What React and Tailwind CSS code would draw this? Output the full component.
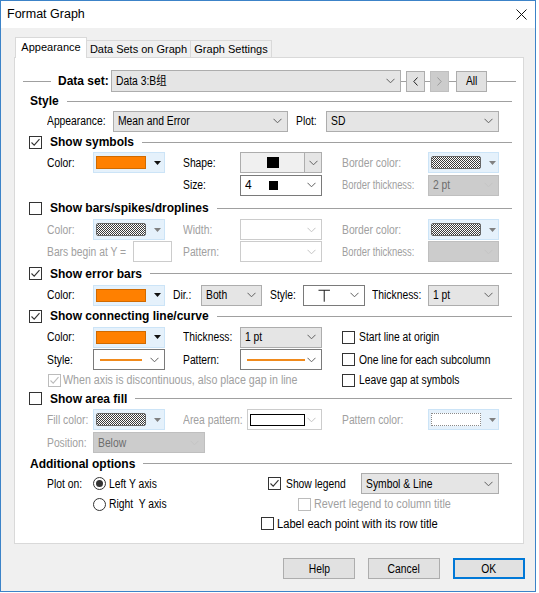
import React from 'react';

const NF = "font-['Liberation_Sans','Noto_Sans_CJK_SC',Arial,sans-serif] text-[12px]";
const BF = "font-['Liberation_Sans',Arial,sans-serif] font-bold text-[12px] text-black whitespace-nowrap";
const DIM = 'text-[#a0a0a0]';

// The dialog font is a narrow MS Sans Serif; squeeze Liberation Sans horizontally to match.
function Txt({ children, sx = 'scale-x-[0.86]', origin = 'origin-left' }) {
    return <span className={`inline-block whitespace-pre ${origin} ${sx}`}>{children}</span>;
}

function Chevron({ color = '#606060' }) {
    return (
        <svg width="9" height="6" viewBox="0 0 9 6" className="shrink-0">
            <path d="M0.5 0.8 L4.5 4.8 L8.5 0.8" fill="none" stroke={color} strokeWidth="1" />
        </svg>
    );
}

function Combo({ w, variant = 'gray', children, h = 'h-[21px]' }) {
    const styles = {
        gray: 'bg-[#e5e5e5] border-[#adadad] text-black',
        white: 'bg-white border-[#7a7a7a] text-black',
        disabled: 'bg-[#cccccc] border-[#bfbfbf] text-[#6d6d6d]',
        disabledWhite: 'bg-white border-[#cccccc] text-[#a0a0a0]',
    };
    const off = variant === 'disabled' || variant === 'disabledWhite';
    return (
        <div className={`${w} ${h} shrink-0 border ${styles[variant]} flex items-center pl-[4px] pr-[5px]`}>
            <div className="flex-1 flex items-center min-w-0 overflow-hidden whitespace-nowrap">
                {typeof children === 'string' ? <Txt>{children}</Txt> : children}
            </div>
            <Chevron color={off ? '#c4c4c4' : '#606060'} />
        </div>
    );
}

function ColorDrop({ kind, w = 'w-[72px]' }) {
    let swatch;
    if (kind === 'orange') {
        swatch = <div className="w-[50px] h-[13px] bg-[#ff8000] border border-[#d06a00]" />;
    } else if (kind === 'hatch') {
        swatch = (
            <div className="w-[50px] h-[13px] border border-[#666] rounded-[2px] bg-[repeating-conic-gradient(#3a3a3a_0_25%,#ffffff_0_50%)] bg-[length:2px_2px]" />
        );
    } else {
        swatch = <div className="w-[50px] h-[13px] border border-dotted border-[#8a8a8a] bg-white" />;
    }
    return (
        <div className={`${w} h-[21px] shrink-0 bg-[#e5f1fb] border border-[#cce4f7] flex items-center pl-[2px] gap-[8px]`}>
            {swatch}
            <svg width="7" height="4" viewBox="0 0 7 4">
                <path d="M0 0 H7 L3.5 4 Z" fill={kind === 'orange' ? '#111' : '#808080'} />
            </svg>
        </div>
    );
}

function Checkbox({ checked, disabled, className = '' }) {
    const c = disabled ? '#bcbcbc' : '#333333';
    return (
        <div className={`w-[13px] h-[13px] shrink-0 border bg-white flex items-center justify-center ${disabled ? 'border-[#bcbcbc]' : 'border-[#333333]'} ${className}`}>
            {checked && (
                <svg width="11" height="11" viewBox="0 0 11 11">
                    <path d="M1.5 5.5 L4.2 8.2 L9.5 2.2" fill="none" stroke={c} strokeWidth="1.1" />
                </svg>
            )}
        </div>
    );
}

function Radio({ checked }) {
    return (
        <div className="w-[13px] h-[13px] shrink-0 rounded-full border border-[#333333] bg-white flex items-center justify-center">
            {checked && <div className="w-[7px] h-[7px] rounded-full bg-[#333333]" />}
        </div>
    );
}

function Label({ w, dim, sx, children }) {
    return (
        <span className={`${w} shrink-0 whitespace-nowrap ${dim ? DIM : 'text-black'}`}>
            <Txt sx={sx}>{children}</Txt>
        </span>
    );
}

function Gap({ w }) {
    return <div className={`${w} shrink-0`} />;
}

function Heading({ h, check, checked, children }) {
    return (
        <div className={`${h} shrink-0 flex items-center pr-[11px] ${check ? 'pl-[14px]' : 'pl-[15px]'}`}>
            {check && <Checkbox checked={checked} className="mr-[8px]" />}
            <span className={BF}>{children}</span>
            <div className="flex-1 h-px bg-[#a0a0a0] ml-[8px]" />
        </div>
    );
}

function Row({ h, pl = 'pl-[32px]', children }) {
    return <div className={`${h} ${pl} shrink-0 flex items-center ${NF}`}>{children}</div>;
}

function OrangeLine({ w }) {
    return <div className={`${w} h-[2px] bg-[#f08a1c]`} />;
}

function NavBtn({ disabled, children }) {
    return (
        <div className={`w-[19px] h-[21px] shrink-0 border flex items-center justify-center ${disabled ? 'bg-[#cccccc] border-[#bfbfbf]' : 'bg-[#e1e1e1] border-[#adadad]'}`}>
            {children}
        </div>
    );
}

function DialogBtn({ primary, children }) {
    return (
        <div className={`w-[72px] h-[21px] flex items-center justify-center bg-[#e1e1e1] ${NF} ${primary ? 'border-2 border-[#0078d7]' : 'border border-[#adadad]'}`}>
            <Txt origin="origin-center">{children}</Txt>
        </div>
    );
}

function Line({ w }) {
    return <div className={`${w} h-px bg-[#a0a0a0] shrink-0`} />;
}

function CheckText({ dim, ml = 'ml-[4px]', sx, children }) {
    return (
        <span className={`${ml} whitespace-nowrap ${dim ? DIM : 'text-black'}`}>
            <Txt sx={sx}>{children}</Txt>
        </span>
    );
}

export default function App() {
    return (
        <div className="w-[539px] h-[593px] bg-white flex items-start">
            <div className="w-[536px] h-[592px] border border-[#3c83c8] bg-[#f0f0f0] flex flex-col">
                {/* Title bar */}
                <div className="h-[27px] shrink-0 bg-white flex items-center justify-between pl-[6px] pr-[8px]">
                    <span className="font-['Liberation_Sans',Arial,sans-serif] text-[12.5px] text-black">Format Graph</span>
                    <svg width="11" height="11" viewBox="0 0 11 11">
                        <path d="M0.5 0.5 L10.5 10.5 M10.5 0.5 L0.5 10.5" stroke="#111" strokeWidth="1" />
                    </svg>
                </div>

                <div className="pt-[9px] pl-[13px] flex flex-col">
                    {/* Tabs */}
                    <div className="flex items-end h-[20px] pl-[1px] relative z-10 font-['Liberation_Sans',Arial,sans-serif] text-[11px] text-black">
                        <div className="h-[21px] -mb-[1px] w-[72px] bg-white border border-b-0 border-[#d9d9d9] flex items-center justify-center pb-[1px]">
                            Appearance
                        </div>
                        <div className="h-[17px] w-[104px] border border-b-0 border-l-0 border-[#d9d9d9] flex items-center justify-center">
                            Data Sets on Graph
                        </div>
                        <div className="h-[17px] w-[81px] border border-b-0 border-l-0 border-[#d9d9d9] flex items-center justify-center">
                            Graph Settings
                        </div>
                    </div>

                    {/* Panel */}
                    <div className="w-[510px] h-[487px] bg-white border border-[#d9d9d9] flex flex-col pt-[12px]">
                        {/* Data set */}
                        <div className={`h-[22px] shrink-0 flex items-center pl-[8px] pr-[7px] ${NF}`}>
                            <Line w="w-[28px]" />
                            <span className={`${BF} ml-[7px] mr-[2px]`}>Data set:</span>
                            <Combo w="w-[290px]" h="h-[22px]">Data 3:B组</Combo>
                            <Line w="w-[5px]" />
                            <NavBtn>
                                <svg width="5" height="9" viewBox="0 0 5 9">
                                    <path d="M4.5 0.5 L0.8 4.5 L4.5 8.5" fill="none" stroke="#222" strokeWidth="1" />
                                </svg>
                            </NavBtn>
                            <Line w="w-[5px]" />
                            <NavBtn disabled>
                                <svg width="5" height="9" viewBox="0 0 5 9">
                                    <path d="M0.5 0.5 L4.2 4.5 L0.5 8.5" fill="none" stroke="#9a9a9a" strokeWidth="1" />
                                </svg>
                            </NavBtn>
                            <Line w="w-[7px]" />
                            <div className="w-[31px] h-[21px] shrink-0 bg-[#e1e1e1] border border-[#adadad] flex items-center justify-center">
                                <Txt origin="origin-center">All</Txt>
                            </div>
                            <div className="flex-1 h-px bg-[#a0a0a0]" />
                        </div>

                        <Heading h="h-[18px]">Style</Heading>

                        <Row h="h-[22px]">
                            <Label w="w-[66px]">Appearance:</Label>
                            <Combo w="w-[175px]">Mean and Error</Combo>
                            <Gap w="w-[8px]" />
                            <Label w="w-[30px]">Plot:</Label>
                            <Combo w="w-[173px]">SD</Combo>
                        </Row>

                        <Heading h="h-[20px]" check checked>Show symbols</Heading>

                        <Row h="h-[21px]">
                            <Label w="w-[46px]">Color:</Label>
                            <ColorDrop kind="orange" />
                            <Gap w="w-[18px]" />
                            <Label w="w-[57px]">Shape:</Label>
                            <div className="w-[82px] h-[21px] shrink-0 border border-[#adadad] flex">
                                <div className="flex-1 bg-[#f0f0f0] flex items-center justify-center">
                                    <div className="w-[12px] h-[11px] bg-black" />
                                </div>
                                <div className="w-[17px] bg-[#e5e5e5] border-l border-[#adadad] flex items-center justify-center">
                                    <Chevron />
                                </div>
                            </div>
                            <Gap w="w-[20px]" />
                            <Label w="w-[86px]" dim>Border color:</Label>
                            <ColorDrop kind="hatch" w="w-[71px]" />
                        </Row>

                        <Row h="h-[24px]">
                            <Gap w="w-[136px]" />
                            <Label w="w-[57px]">Size:</Label>
                            <Combo w="w-[82px]" variant="white">
                                <span className="w-[24px]">4</span>
                                <div className="w-[9px] h-[9px] bg-black" />
                            </Combo>
                            <Gap w="w-[20px]" />
                            <Label w="w-[86px]" dim sx="scale-x-[0.78]">Border thickness:</Label>
                            <Combo w="w-[71px]" variant="disabled">2 pt</Combo>
                        </Row>

                        <Heading h="h-[22px]" check>Show bars/spikes/droplines</Heading>

                        <Row h="h-[21px]">
                            <Label w="w-[46px]" dim>Color:</Label>
                            <ColorDrop kind="hatch" />
                            <Gap w="w-[18px]" />
                            <Label w="w-[57px]" dim>Width:</Label>
                            <Combo w="w-[82px]" variant="disabledWhite" />
                            <Gap w="w-[20px]" />
                            <Label w="w-[86px]" dim>Border color:</Label>
                            <ColorDrop kind="hatch" w="w-[71px]" />
                        </Row>

                        <Row h="h-[23px]">
                            <Label w="w-[86px]" dim>Bars begin at Y =</Label>
                            <div className="w-[39px] h-[21px] shrink-0 bg-white border border-[#cccccc]" />
                            <Gap w="w-[11px]" />
                            <Label w="w-[57px]" dim>Pattern:</Label>
                            <Combo w="w-[82px]" variant="disabledWhite" />
                            <Gap w="w-[20px]" />
                            <Label w="w-[86px]" dim sx="scale-x-[0.78]">Border thickness:</Label>
                            <Combo w="w-[71px]" variant="disabled" />
                        </Row>

                        <Heading h="h-[21px]" check checked>Show error bars</Heading>

                        <Row h="h-[22px]">
                            <Label w="w-[46px]">Color:</Label>
                            <ColorDrop kind="orange" />
                            <Gap w="w-[8px]" />
                            <Label w="w-[28px]">Dir.:</Label>
                            <Combo w="w-[61px]">Both</Combo>
                            <Gap w="w-[8px]" />
                            <Label w="w-[33px]">Style:</Label>
                            <Combo w="w-[62px]" variant="white">
                                <svg width="44" height="15" viewBox="0 0 44 15">
                                    <path d="M11 2 H23 M17 2 V14" fill="none" stroke="#111" strokeWidth="1" />
                                </svg>
                            </Combo>
                            <Gap w="w-[7px]" />
                            <Label w="w-[56px]">Thickness:</Label>
                            <Combo w="w-[71px]">1 pt</Combo>
                        </Row>

                        <Heading h="h-[20px]" check checked>Show connecting line/curve</Heading>

                        <Row h="h-[22px]">
                            <Label w="w-[46px]">Color:</Label>
                            <ColorDrop kind="orange" />
                            <Gap w="w-[18px]" />
                            <Label w="w-[57px]">Thickness:</Label>
                            <Combo w="w-[82px]">1 pt</Combo>
                            <Gap w="w-[20px]" />
                            <Checkbox />
                            <CheckText>Start line at origin</CheckText>
                        </Row>

                        <Row h="h-[23px]">
                            <Label w="w-[46px]">Style:</Label>
                            <Combo w="w-[72px]" variant="white">
                                <div className="pl-[2px]"><OrangeLine w="w-[42px]" /></div>
                            </Combo>
                            <Gap w="w-[18px]" />
                            <Label w="w-[57px]">Pattern:</Label>
                            <Combo w="w-[82px]" variant="white">
                                <div className="pl-[2px]"><OrangeLine w="w-[58px]" /></div>
                            </Combo>
                            <Gap w="w-[20px]" />
                            <Checkbox />
                            <CheckText>One line for each subcolumn</CheckText>
                        </Row>

                        <Row h="h-[18px]" pl="pl-[33px]">
                            <div className="w-[294px] shrink-0 flex items-center overflow-hidden">
                                <Checkbox checked disabled />
                                <CheckText dim ml="ml-[2px]" sx="scale-x-[0.89]">
                                    When axis is discontinuous, also place gap in line
                                </CheckText>
                            </div>
                            <Checkbox />
                            <CheckText>Leave gap at symbols</CheckText>
                        </Row>

                        <Heading h="h-[19px]" check>Show area fill</Heading>

                        <Row h="h-[23px]">
                            <Label w="w-[46px]" dim>Fill color:</Label>
                            <ColorDrop kind="hatch" />
                            <Gap w="w-[18px]" />
                            <Label w="w-[64px]" dim>Area pattern:</Label>
                            <div className="w-[75px] h-[21px] shrink-0 border border-[#cccccc] bg-white flex items-center pl-[2px] pr-[5px]">
                                <div className="w-[55px] h-[12px] border border-black bg-white" />
                                <div className="flex-1" />
                                <Chevron color="#c4c4c4" />
                            </div>
                            <Gap w="w-[20px]" />
                            <Label w="w-[86px]" dim>Pattern color:</Label>
                            <ColorDrop kind="dotted" w="w-[71px]" />
                        </Row>

                        <Row h="h-[23px]">
                            <Label w="w-[46px]" dim>Position:</Label>
                            <Combo w="w-[112px]" variant="disabled">Below</Combo>
                        </Row>

                        <Heading h="h-[19px]">Additional options</Heading>

                        <Row h="h-[21px]">
                            <Label w="w-[46px]">Plot on:</Label>
                            <div className="w-[175px] shrink-0 flex items-center">
                                <Radio checked />
                                <CheckText ml="ml-[3px]">Left Y axis</CheckText>
                            </div>
                            <div className="w-[93px] shrink-0 flex items-center overflow-hidden">
                                <Checkbox checked />
                                <CheckText ml="ml-[5px]">Show legend</CheckText>
                            </div>
                            <Combo w="w-[138px]">Symbol &amp; Line</Combo>
                        </Row>

                        <Row h="h-[20px]">
                            <Gap w="w-[46px]" />
                            <div className="w-[205px] shrink-0 flex items-center">
                                <Radio />
                                <CheckText ml="ml-[3px]">Right  Y axis</CheckText>
                            </div>
                            <Checkbox disabled />
                            <CheckText dim ml="ml-[3px]" sx="scale-x-[0.9]">Revert legend to column title</CheckText>
                        </Row>

                        <Row h="h-[19px]">
                            <Gap w="w-[214px]" />
                            <Checkbox />
                            <CheckText ml="ml-[3px]" sx="scale-x-[0.93]">Label each point with its row title</CheckText>
                        </Row>
                    </div>

                    {/* Buttons */}
                    <div className="flex gap-[13px] mt-[14px] pl-[269px]">
                        <DialogBtn>Help</DialogBtn>
                        <DialogBtn>Cancel</DialogBtn>
                        <DialogBtn primary>OK</DialogBtn>
                    </div>
                </div>
            </div>
        </div>
    );
}
